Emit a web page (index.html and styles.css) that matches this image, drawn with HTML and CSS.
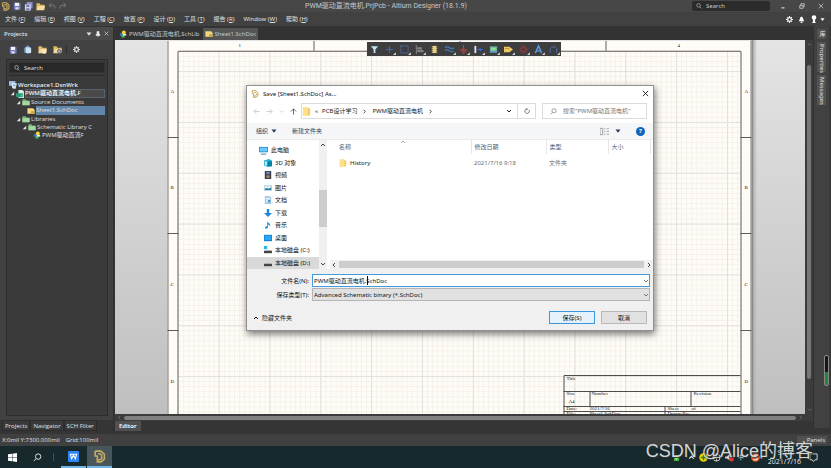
FILE: index.html
```html
<!DOCTYPE html>
<html lang="zh-CN">
<head>
<meta charset="utf-8">
<title>PWM驱动直流电机.PrjPcb - Altium Designer (18.1.9)</title>
<link rel="stylesheet" href="styles.css">
</head>
<body>
<svg class="defs" aria-hidden="true">
  <symbol id="altium" viewBox="0 0 12 12"><path d="M2 1h5.2L10.500 4v4.500L7.500 11H4V8.500M2 1v4.500h2.500M4.500 3.500h2L8 5v3L6.500 9H4V5.500" fill="none" stroke="#c9a961" stroke-width="1.500"/></symbol>
  <symbol id="disk" viewBox="0 0 10 10"><path d="M1 1h7.500L9.500 2v7.500H1z" fill="#7779bd"/><path d="M2.500 1h5v4h-5z" fill="#f1f1fa"/><path d="M3 6.500h4v3H3z" fill="#dcdcf0"/></symbol>
  <symbol id="folder" viewBox="0 0 10 10"><path d="M.5 1.500h3.500l1 1.500h4.500v6H.5z" fill="#e2b866"/><path d="M2 4.500h8L8.500 9.200H.5z" fill="#f4dca0"/></symbol>
  <symbol id="greenfolder" viewBox="0 0 10 10"><path d="M.5 1.500h4l1 1.500h4v6H.5z" fill="#76b478"/><path d="M.5 4h9v5h-9z" fill="#a5d7a2"/></symbol>
  <symbol id="winfolder" viewBox="0 0 10 10"><path d="M1 .5h5.500v1H9v8H1z" fill="#f3ce64"/><path d="M1 .5h5.500v9H1z" fill="#ffe08a"/></symbol>
  <symbol id="sheet" viewBox="0 0 10 8"><path d="M.5.500h7l2 2v5h-9z" fill="#f3d77a"/><path d="M5 4h4.500v3.500H5z" fill="#cca848"/></symbol>
  <symbol id="lib" viewBox="0 0 10 10"><path d="M1 4h4v3H1z" fill="#3478c9"/><circle cx="6" cy="3" r="2.500" fill="#f4d13d"/><path d="M3 6h4v3.500H3z" fill="#4cae62"/><path d="M5 5h4v2H5z" fill="#e8f0e0"/></symbol>
  <symbol id="mag" viewBox="0 0 10 10"><circle cx="5.700" cy="4" r="3" fill="none" stroke="currentColor"/><path d="M3.500 6.300L.8 9" stroke="currentColor" fill="none"/></symbol>
  <symbol id="maglens" viewBox="0 0 10 10"><circle cx="4.300" cy="4" r="3" fill="none" stroke="currentColor"/><path d="M6.500 6.300L9 9" stroke="currentColor" fill="none"/></symbol>
  <symbol id="gear" viewBox="0 0 10 10"><circle cx="5" cy="5" r="2.700" fill="none" stroke="currentColor" stroke-width="1.700"/><path d="M5 0v1.500M5 8.500V10M0 5h1.500M8.500 5H10M1.500 1.500l1 1M7.500 7.500l1 1M8.500 1.500l-1 1M2.500 7.500l-1 1" stroke="currentColor" stroke-width="1.500"/></symbol>
  <symbol id="down" viewBox="0 0 6 6"><path d="M1 2l2 2 2-2" fill="none" stroke="currentColor"/></symbol>
  <symbol id="up" viewBox="0 0 6 6"><path d="M1 4l2-2 2 2" fill="none" stroke="currentColor"/></symbol>
  <symbol id="left" viewBox="0 0 6 6"><path d="M4 1L2 3l2 2" fill="none" stroke="currentColor"/></symbol>
  <symbol id="right" viewBox="0 0 6 6"><path d="M2 1l2 2-2 2" fill="none" stroke="currentColor"/></symbol>
  <symbol id="tri" viewBox="0 0 6 6"><path d="M.5 1.500h5L3 4.800z" fill="currentColor"/></symbol>
  <symbol id="open" viewBox="0 0 6 6"><path d="M5 1v4H1z" fill="#e6e6e6"/></symbol>
  <symbol id="x" viewBox="0 0 8 8"><path d="M1 1l6 6M7 1L1 7" fill="none" stroke="currentColor"/></symbol>
</svg>

<header class="titlebar">
  <div class="quick">
    <svg class="i9"><use href="#altium"/></svg>
    <button aria-label="Save"><svg class="i8"><use href="#disk"/></svg></button>
    <button aria-label="Save all"><svg class="i9" viewBox="0 0 10 10"><path d="M3 0h6.500v7H3z" fill="#8d8fca"/><path d="M1 2.500h6.500v7H1z" fill="#cfd0ee"/><path d="M2.500 3h3.500v2.500H2.500zM2.500 7h3.500v2H2.500z" fill="#7779bd"/></svg></button>
    <button aria-label="Open"><svg class="i9"><use href="#folder"/></svg></button>
    <button aria-label="Undo"><svg class="i8" viewBox="0 0 8 8"><path d="M3.500 1L1 3.200l2.500 2M1 3.200h4q2.500.3 2 3.300" fill="none" stroke="#787878"/></svg></button>
    <button aria-label="Redo"><svg class="i8" viewBox="0 0 8 8"><path d="M4.500 1L7 3.200l-2.500 2M7 3.200H3Q.5 3.500 1 6.500" fill="none" stroke="#787878"/></svg></button>
  </div>
  <div class="caption">PWM驱动直流电机.PrjPcb - Altium Designer (18.1.9)</div>
  <div class="winctl">
    <label class="topsearch"><svg class="i6"><use href="#maglens"/></svg><input aria-label="Search" placeholder="Search"></label>
    <button aria-label="Minimize"><svg class="i6" viewBox="0 0 8 8"><path d="M2 6.500h4" stroke="#ddd" stroke-width="1.500"/></svg></button>
    <button aria-label="Restore"><svg class="i6" viewBox="0 0 8 8"><path d="M1 3.500h4.500V7H1zM2.500 3V1H7v3.800H6" fill="none" stroke="#ddd"/></svg></button>
    <button aria-label="Close"><svg class="i6"><use href="#x"/></svg></button>
  </div>
</header>

<nav class="menubar">
  <a href="#">文件 (<u>F</u>)</a><a href="#">编辑 (<u>E</u>)</a><a href="#">视图 (<u>V</u>)</a><a href="#">工程 (<u>C</u>)</a><a href="#">放置 (<u>P</u>)</a><a href="#">设计 (<u>D</u>)</a><a href="#">工具 (<u>T</u>)</a><a href="#">报告 (<u>R</u>)</a><a href="#">Window (<u>W</u>)</a><a href="#">帮助 (<u>H</u>)</a>
  <div class="menuicons">
    <button aria-label="Settings"><svg class="i7"><use href="#gear"/></svg></button>
    <button aria-label="Notifications"><svg class="i7" viewBox="0 0 8 8"><path d="M4 .5Q6 1 6 3.500L7 6H1l1-2.500Q2 1 4 .5zM3 6.500h2V8H3z" fill="#fff"/></svg></button>
    <button class="account" aria-label="Account"><svg class="i8" viewBox="0 0 8 8"><circle cx="4" cy="2.500" r="2.300" fill="#fff"/><path d="M3 4h2v2.500l1 1.500H2l1-1.500z" fill="#fff"/></svg><svg class="i5"><use href="#tri"/></svg></button>
  </div>
</nav>

<main class="work">
  <aside class="projects">
    <header><h2>Projects</h2><svg class="i6"><use href="#tri"/></svg><svg class="i6" viewBox="0 0 6 6"><path d="M2 .5h2v3h1v1H1v-1h1zM3 4v2" fill="#eee" stroke="#eee" stroke-width=".6"/></svg><svg class="i5"><use href="#x"/></svg></header>
    <div class="tools">
      <svg class="i8"><use href="#disk"/></svg>
      <svg class="i9" viewBox="0 0 10 10"><path d="M1 4l4-4 4 3v5L6 10 1 8z" fill="#5f8bb5"/><path d="M3 2.500h4L9 4v5H3z" fill="#cfe2f0"/></svg>
      <svg class="i9" viewBox="0 0 10 10"><use href="#folder"/><path d="M5 5h4v4.500H5z" fill="#f6e9c8"/></svg>
      <svg class="i9" viewBox="0 0 10 10"><use href="#folder"/><circle cx="7" cy="7" r="2" fill="#aaa" stroke="#555"/></svg>
      <i></i>
      <svg class="i7"><use href="#gear"/></svg>
    </div>
    <div class="treebox">
      <label class="search"><svg class="i6"><use href="#maglens"/></svg><input aria-label="Search projects" placeholder="Search"></label>
      <hr>
      <ul class="tree">
        <li class="l0 b"><svg class="i8" viewBox="0 0 10 10"><path d="M0 0h8v6H0z" fill="#9ab8df"/><path d="M3 2l7 1-2 7-4-1z" fill="#dbe7f5"/><path d="M5 5l3 1" stroke="#3e6ba5"/></svg>Workspace1.DsnWrk</li>
        <li class="l1 b tall project"><svg class="i5"><use href="#open"/></svg><svg class="i8" viewBox="0 0 10 10"><path d="M3 0h5l2 2v8H3z" fill="#d5efe3"/><path d="M0 4h7v5H0z" fill="#2b9878"/><path d="M6 4h3v5H6z" fill="#4ab48f"/></svg><span>PWM驱动直流电机.F</span></li>
        <li class="l2"><svg class="i5"><use href="#open"/></svg><svg class="i8"><use href="#greenfolder"/></svg>Source Documents</li>
        <li class="l3 tall current"><svg class="i8"><use href="#sheet"/></svg><span>Sheet1.SchDoc</span></li>
        <li class="l2"><svg class="i5"><use href="#open"/></svg><svg class="i8"><use href="#greenfolder"/></svg>Libraries</li>
        <li class="l4"><svg class="i5"><use href="#open"/></svg><svg class="i8"><use href="#greenfolder"/></svg>Schematic Library C</li>
        <li class="l5"><svg class="i8"><use href="#lib"/></svg>PWM驱动直流F</li>
      </ul>
    </div>
    <div class="paneltabs"><button>Projects</button><button>Navigator</button><button>SCH Filter</button></div>
  </aside>

  <section class="editor">
    <div class="doctabs"><button><svg class="i8"><use href="#lib"/></svg>PWM驱动直流电机.SchLib</button><button class="on"><svg class="i8"><use href="#sheet"/></svg>Sheet1.SchDoc</button></div>
    <div class="viewport">
      <div class="canvas">
        <svg class="paper" viewBox="115 40 691 374" preserveAspectRatio="xMidYMin slice">
          <defs>
            <pattern id="minor" x="168.500" y="20.400" width="5.080" height="5.080" patternUnits="userSpaceOnUse"><path d="M0 .5h5.080M.5 0v5.080" stroke="#f5f1ea" stroke-width=".9"/></pattern>
            <pattern id="major" x="168.200" y="20.200" width="50.850" height="50.850" patternUnits="userSpaceOnUse"><path d="M0 .5h51M.5 0v51" stroke="#e3e1dc"/></pattern>
            <linearGradient id="edge"><stop offset="0" stop-color="#666"/><stop offset=".4" stop-color="#aaa" stop-opacity=".7"/><stop offset="1" stop-color="#bbb" stop-opacity="0"/></linearGradient>
          </defs>
          <path d="M752 40h6v374h-6z" fill="url(#edge)"/>
          <path d="M168 41h584v373H168z" fill="#fffcf7"/>
          <path d="M179 51h562v363H179z" fill="url(#minor)"/>
          <path d="M179 51h562v363H179z" fill="url(#major)"/>
          <path d="M168.500 414V41M751.500 41v373" stroke="#777" fill="none"/>
          <path d="M178.500 414V51.500h563V414M168 137.500h11M168 233.500h11M168 330.500h11M741 137.500h11M741 233.500h11M741 330.500h11M314.500 41v10M460.500 41v10M606.500 41v10" stroke="#5d5b59" fill="none"/>
          <path d="M179 51h562" stroke="#aaa5a0"/>
          <g class="zone"><text x="239" y="47">1</text><text x="385" y="47">2</text><text x="531" y="47">3</text><text x="678" y="47">4</text>
          <text x="171" y="93">A</text><text x="171" y="189">B</text><text x="171" y="286">C</text><text x="171" y="383">D</text>
          <text x="745" y="93">A</text><text x="745" y="189">B</text><text x="745" y="286">C</text><text x="745" y="383">D</text></g>
          <path d="M564.500 414v-38.500H741M564 391.500h177M564 406.500h177M564 411.500h177M590.500 391v15M691.500 391v15M665.500 406v8" stroke="#4f4d4b" fill="none"/>
          <g class="block"><text x="567" y="380">Title</text><text x="567" y="395">Size</text><text x="569" y="403">A4</text><text x="592" y="395">Number</text><text x="694" y="395">Revision</text><text x="567" y="410">Date:</text><text x="590" y="410">2021/7/16</text><text x="668" y="410">Sheet</text><text x="692" y="410">of</text><text x="567" y="415">File:</text><text x="590" y="415">Sheet1.SchDoc</text><text x="668" y="415">Drawn By:</text></g>
        </svg>
        <div class="active" role="toolbar">
          <svg viewBox="0 0 10 10"><path d="M1 1.500h8L6 5v4H4V5z" fill="#bfe6f2"/></svg>
          <svg viewBox="0 0 10 10"><path d="M5 1v8M1 5h8" stroke="#4668a8" stroke-width="1.200"/><path d="M12 8v3H9z" fill="#ddd"/></svg>
          <svg viewBox="0 0 10 10"><path d="M1 1h8v8H1z" fill="none" stroke="#5577c4" stroke-dasharray="2 1"/><path d="M12 8v3H9z" fill="#ddd"/></svg>
          <svg viewBox="0 0 10 10"><path d="M1.500 0v10M3 3h4v1.500H3zM3 6h6v1.500H3z" stroke="#8a8a8a" fill="#777"/><path d="M12 8v3H9z" fill="#ddd"/></svg>
          <svg viewBox="0 0 10 10"><path d="M3 1h4v8H3z" fill="#f0cf72"/><path d="M2 2h1M2 4h1M2 6h1M2 8h1M7 2h1M7 4h1M7 6h1M7 8h1" stroke="#fff0b8"/></svg>
          <svg viewBox="0 0 10 10"><path d="M0 3q2.500-2 5 0t5 0M0 6.500q2.500-2 5 0t5 0" fill="none" stroke="#3f7fc0" stroke-width="1.300"/><path d="M12 8v3H9z" fill="#ddd"/></svg>
          <svg viewBox="0 0 10 10"><path d="M5 0v5M1 5.500h8M2.500 7.500h5M4 9.300h2" stroke="#b8443e" stroke-width="1.300"/><path d="M12 8v3H9z" fill="#ddd"/></svg>
          <svg viewBox="0 0 10 10"><path d="M1.500 1v8" stroke="#dce8ff" stroke-width="2"/><path d="M3 5h3l1-2v4l1-2h2" fill="none" stroke="#3e67bd" stroke-width="1.200"/><path d="M12 8v3H9z" fill="#ddd"/></svg>
          <svg viewBox="0 0 10 10"><path d="M1 1.500h8v7H1z" fill="#6fae9f"/><path d="M2.500 3h5v3h-5z" fill="#8be091"/><path d="M1 7.500h8" stroke="#5a8fd6"/><path d="M12 8v3H9z" fill="#ddd"/></svg>
          <svg viewBox="0 0 10 10"><path d="M0 2h6l4 3-4 3H0z" fill="#f0c964"/><path d="M1 4h5" stroke="#b89036"/><path d="M12 8v3H9z" fill="#ddd"/></svg>
          <svg viewBox="0 0 10 10"><path d="M5 .5L9.500 5 5 9.500.5 5z" fill="none" stroke="#a3383a"/><circle cx="5" cy="5" r="2.200" fill="none" stroke="#a3383a"/><path d="M12 8v3H9z" fill="#ddd"/></svg>
          <svg viewBox="0 0 10 10"><path d="M1.500 9L5 1l3.500 8M3 6.500h4" fill="none" stroke="#5c9be0" stroke-width="1.600"/><path d="M12 8v3H9z" fill="#ddd"/></svg>
          <svg viewBox="0 0 10 10"><path d="M1.500 9Q0 2 5 2t3.500 7" fill="none" stroke="#466fa8" stroke-width="1.100"/><path d="M12 8v3H9z" fill="#ddd"/></svg>
        </div>
      </div>
      <div class="vbar"><svg class="i5"><use href="#up"/></svg><i></i><svg class="i5"><use href="#down"/></svg></div>
      <div class="hbar"><svg class="i5"><use href="#left"/></svg><i></i><svg class="i5"><use href="#right"/></svg></div>
    </div>
    <div class="edtab"><button>Editor</button></div>
  </section>

  <aside class="rail"><button>库</button><button>Properties</button><button>Messages</button><div class="meter"></div></aside>
</main>

<footer class="status"><span>X:0mil Y:7300.000mil</span><span>Grid:100mil</span><button>Panels</button></footer>

<div class="taskbar">
  <button class="tb" aria-label="Start"><svg class="i9" viewBox="0 0 10 10"><path d="M0 1.500l4.500-.7v3.900H0zM5 .7L10 0v4.700H5zM0 5.200h4.500v4L0 8.600zM5 5.200h5V10l-5-.7z" fill="#fff"/></svg></button>
  <button class="tb" aria-label="Search"><svg class="i9"><use href="#mag"/></svg></button>
  <i class="tbsep"></i>
  <button class="tb run" aria-label="WPS"><svg class="i11" viewBox="0 0 12 12"><rect width="12" height="12" rx="1" fill="#2d86f5"/><path d="M2 3.500h8M2.500 3.500L4 8.500l2-4 2 4 1.500-5" fill="none" stroke="#fff" stroke-width="1.200"/></svg></button>
  <button class="tb run focus" aria-label="Altium Designer"><svg class="i13"><use href="#altium"/></svg></button>
  <div class="tray">
    <svg class="i7" viewBox="0 0 8 8"><rect x="1" y="1" width="6" height="7" rx="1" fill="#42b83a"/><path d="M2.500 5L4 6l2-3" stroke="#fff" fill="none"/></svg>
    <svg class="i7"><use href="#up"/></svg>
    <svg class="i9" viewBox="0 0 10 10"><circle cx="5" cy="5" r="4.700" fill="#f5d500"/><path d="M5 2v6M2 5h6" stroke="#24802f" stroke-width="1.600"/></svg>
    <svg class="i9" viewBox="0 0 10 10"><circle cx="5" cy="5" r="4" fill="none" stroke="#ddd"/><path d="M1 5h8M5 1v8" stroke="#ddd"/></svg>
    <svg class="i9" viewBox="0 0 10 10"><path d="M0 4h2l3-3v7L2 6H0z" fill="#ccc"/><circle cx="7.300" cy="7" r="2.500" fill="#e33"/></svg>
    <span>中</span>
    <svg class="i9" viewBox="0 0 10 10"><circle cx="5" cy="5" r="4.800" fill="#ee5a27"/><path d="M7.500 2.500h-4q-1 1.200.5 2.300h2q1.500 1.300.5 2.700h-4" fill="none" stroke="#fff" stroke-width="1.300"/></svg>
    <time>9:23<br>2021/7/16</time>
    <svg class="i9" viewBox="0 0 10 10"><path d="M1 1h8v6.500H6.500L5 9.500 3.500 7.500H1z" fill="none" stroke="#ddd"/></svg>
  </div>
</div>

<div class="watermark">CSDN @Alice的博客</div>

<div class="dialog" role="dialog" aria-labelledby="dlgtitle">
  <header><svg class="i8"><use href="#altium"/></svg><span id="dlgtitle">Save [Sheet1.SchDoc] As...</span><button aria-label="Close"><svg class="i7"><use href="#x"/></svg></button></header>
  <div class="navrow">
    <svg class="i7 dim" viewBox="0 0 8 8"><path d="M4 1L1 4l3 3M1 4h6.500" fill="none" stroke="currentColor"/></svg>
    <svg class="i7 dim" viewBox="0 0 8 8"><path d="M4 1l3 3-3 3M7 4H.5" fill="none" stroke="currentColor"/></svg>
    <svg class="i5 dim"><use href="#down"/></svg>
    <svg class="i7" viewBox="0 0 8 8"><path d="M1 4l3-3 3 3M4 1v6.500" fill="none" stroke="currentColor"/></svg>
    <div class="crumbs"><svg class="i9"><use href="#winfolder"/></svg><span>«</span><span>PCB设计学习</span><svg class="i5"><use href="#right"/></svg><span>PWM驱动直流电机</span><svg class="i5"><use href="#right"/></svg><svg class="i6 push"><use href="#down"/></svg><button aria-label="Refresh"><svg class="i6" viewBox="0 0 8 8"><path d="M6.500 2.500A3 3 0 1 1 3 1.500h1M4 0v3" fill="none" stroke="#555"/></svg></button></div>
    <label class="find"><svg class="i7"><use href="#mag"/></svg><input aria-label="搜索" placeholder='搜索"PWM驱动直流电机"'></label>
  </div>
  <div class="cmds"><button>组织<svg class="i6"><use href="#tri"/></svg></button><button>新建文件夹</button><button class="view" aria-label="View"><svg class="i9" viewBox="0 0 10 8"><path d="M0 .5h3v7H0zM4.500 1h1.500M7.500 1H10M4.500 4h1.500M7.500 4H10M4.500 7h1.500M7.500 7H10" fill="none" stroke="#9a9a9a"/></svg><svg class="i6"><use href="#tri"/></svg></button><button class="help" aria-label="Help">?</button></div>
  <div class="browse">
    <ul class="places">
      <li class="pc"><svg class="i9" viewBox="0 0 10 10"><path d="M0 1h10v6H0z" fill="#2795df"/><path d="M1 2h8v4H1z" fill="#6cc8f7"/><path d="M2 9h6" stroke="#46708c"/></svg>此电脑</li>
      <li><svg class="i8" viewBox="0 0 10 10"><path d="M0 2l6-2 4 2v7l-5 1-5-2z" fill="#25b3d2"/><path d="M4 3h6v6H4z" fill="#087fa7"/><path d="M1 3h3v5H1z" fill="#a9f0f6"/></svg>3D 对象</li>
      <li><svg class="i8" viewBox="0 0 10 10"><path d="M1 0h8v10H1z" fill="#3a3f4c"/><path d="M3 1h4v3H3z" fill="#6f92c9"/><path d="M3 5.500h4v3H3z" fill="#b08b59"/></svg>视频</li>
      <li><svg class="i8" viewBox="0 0 10 10"><path d="M0 1.500h10v7H0z" fill="#b6d5ea"/><path d="M1 3h8v4H1z" fill="#e9f5fb"/><path d="M1 6l3-1 2 1 3-2v3.500H1z" fill="#2c7f9c"/></svg>图片</li>
      <li><svg class="i8" viewBox="0 0 10 10"><path d="M1 0h6l2 2v8H1z" fill="#a8cbe2"/><path d="M2.500 3h5M2.500 5h5M2.500 7h5" stroke="#fff"/><path d="M5 5h3v3H5z" fill="#4d9acb"/></svg>文档</li>
      <li><svg class="i8" viewBox="0 0 10 10"><path d="M3.500 0h3v5H10L5 10 0 5h3.500z" fill="#2283df"/></svg>下载</li>
      <li><svg class="i8" viewBox="0 0 10 10"><path d="M4 0q.5 2 3 3 1.500 1.500 0 4 0-2-2-2.500V8Q4 10 1.500 9.500.5 8 2 7t2 0z" fill="#1497e8"/></svg>音乐</li>
      <li><svg class="i8" viewBox="0 0 10 10"><path d="M0 1h10v8H0z" fill="#1581cf"/><path d="M1 2h8v5.500H1z" fill="#28a7f5"/></svg>桌面</li>
      <li><svg class="i8" viewBox="0 0 10 10"><path d="M0 6h10v3H0z" fill="#444"/><path d="M1 5h8v1H1z" fill="#aaa"/><path d="M0 0h4v4H0z" fill="#29b4ec"/></svg>本地磁盘 (C:)</li>
      <li class="sel"><svg class="i8" viewBox="0 0 10 10"><path d="M0 6h10v3H0z" fill="#444"/><path d="M1 5h8v1H1z" fill="#aaa"/></svg>本地磁盘 (D:)</li>
    </ul>
    <div class="pbar"><svg class="i6"><use href="#up"/></svg><i></i><svg class="i6"><use href="#down"/></svg></div>
    <div class="files">
      <table><thead><tr><th class="c1">名称</th><th class="c2">修改日期</th><th class="c3">类型</th><th class="c4">大小</th><th></th></tr></thead>
      <tbody><tr><td><svg class="i8"><use href="#winfolder"/></svg><span>History</span></td><td>2021/7/16 9:18</td><td>文件夹</td><td></td><td></td></tr></tbody></table>
      <svg class="sort i6"><use href="#up"/></svg>
      <div class="fbar"><svg class="i6"><use href="#left"/></svg><i></i><svg class="i6"><use href="#right"/></svg></div>
    </div>
  </div>
  <form class="save">
    <label for="fn">文件名(N):</label><div class="combo"><input id="fn" value="PWM驱动直流电机.SchDoc"><svg class="i6"><use href="#down"/></svg></div>
    <label for="ft">保存类型(T):</label><div class="combo"><select id="ft"><option>Advanced Schematic binary (*.SchDoc)</option></select><svg class="i6"><use href="#down"/></svg></div>
    <div class="actions"><button type="button" class="hide"><svg class="i6"><use href="#up"/></svg>隐藏文件夹</button><button type="button" class="btn primary">保存(S)</button><button type="button" class="btn">取消</button></div>
  </form>
</div>
</body>
</html>
```
FILE: styles.css
```css
* { box-sizing: border-box; }
html, body { height: 100%; }
body { margin: 0; display: flex; flex-direction: column; overflow: hidden; background: #353535; color: #e0e0e0; font: 6px/8px "Noto Sans", "Noto Sans CJK SC", sans-serif; }
button, input, select { margin: 0; padding: 0; border: 0; background: none; color: inherit; font: inherit; border-radius: 0; outline: 0; min-width: 0; }
button { display: flex; align-items: center; justify-content: center; }
input::placeholder { color: inherit; opacity: 1; }
a { color: inherit; text-decoration: none; }
ul { list-style: none; margin: 0; padding: 0; }
svg { flex: none; display: block; }
.defs { position: absolute; width: 0; height: 0; }
.i5 { width: 5px; height: 5px; } .i6 { width: 6px; height: 6px; } .i7 { width: 7px; height: 7px; }
.i8 { width: 8px; height: 8px; } .i9 { width: 9px; height: 9px; } .i11 { width: 11px; height: 11px; } .i13 { width: 13px; height: 13px; }

.titlebar { display: grid; grid-template-columns: auto 1fr auto; align-items: center; height: 12px; background: #474747; color: #c8c8c8; flex: none; }
.quick { display: flex; gap: 3px; padding-left: 1px; align-items: center; width: 305px; }
.caption { font: 7px/8px Roboto, "Noto Sans CJK SC", sans-serif; }
.winctl { display: flex; align-items: center; gap: 13px; padding-right: 7px; }
.topsearch { display: flex; align-items: center; gap: 4px; width: 78px; height: 10px; padding-left: 4px; background: #2b2b2b; border-radius: 2px; margin-right: -3px; }
.topsearch input, .search input { flex: 1; width: 0; }
.menubar { display: flex; align-items: center; gap: 9px; height: 14px; padding: 0 6px 0 5px; background: #414141; flex: none; }
.menubar u { text-underline-offset: 1px; }
.menuicons { margin-left: auto; display: flex; gap: 5px; color: #fff; align-items: center; }
.account { gap: 2px; }

.work { flex: 1; min-height: 0; display: flex; }
.projects { width: 114px; display: flex; flex-direction: column; background: #414141; border-top: 1px solid #333; border-right: 1px solid #303030; flex: none; font-family: "Open Sans", "Noto Sans CJK SC", sans-serif; }
.projects header { display: flex; align-items: center; gap: 3px; height: 13px; padding: 0 4px; background: #4a4a4a; }
.projects h2 { margin: 0 auto 0 0; font-size: 6px; font-weight: 600; }
.tools { display: flex; align-items: center; gap: 6px; height: 19px; padding-left: 9px; }
.tools i { width: 1px; height: 8px; background: #2c2c2c; margin-left: -2px; }
.treebox { flex: 1; margin: 0 5px 4px 6px; padding: 2px 2px; background: #3a3a3a; border: 1px solid #2c2c2c; }
.search { display: flex; align-items: center; gap: 4px; height: 11px; padding-left: 4px; background: #282828; border: 1px solid #333; border-radius: 1px; }
hr { height: 1px; border: 0; background: #292929; margin: 2px 0 5px; }
.tree li { display: flex; align-items: center; gap: 1px; height: 8px; white-space: nowrap; overflow: hidden; }
.tree .tall { height: 9px; }
.b { font-weight: 600; color: #eee; }
.l1 { padding-left: 1px; } .l2 { padding-left: 7px; } .l3 { padding-left: 18px; } .l4 { padding-left: 13px; } .l5 { padding-left: 24px; }
.tree li span { flex: 1; height: 9px; }
.project span { background: #4a4a4a; box-shadow: inset 0 0 0 1px #576370; }
.current span { background: #6186a9; }
.paneltabs { display: flex; height: 14px; padding: 0 0 3px 2px; background: #353535; }
.paneltabs button { padding: 0 2px; border: 1px solid #2c2c2c; background: #3a3a3a; }

.editor { flex: 1; min-width: 0; display: flex; flex-direction: column; padding-left: 1px; }
.doctabs { display: flex; gap: 1px; height: 14px; padding: 2px 0 0 2px; background: #333; }
.doctabs button { gap: 2px; padding: 0 2px; color: #c8c8c8; }
.doctabs .on { background: #555; }
.viewport { flex: 1; min-height: 0; display: grid; grid-template-columns: 1fr 8px; grid-template-rows: 1fr 7px; background: #3c3c3c; }
.canvas { position: relative; min-height: 0; overflow: hidden; background: linear-gradient(#e4e4e4, #bfbfbf); }
.paper { position: absolute; width: 100%; height: 100%; }
.zone, .block { font: 5px "Liberation Serif", serif; fill: #111; }
.active { position: absolute; top: 2px; left: 252px; width: 194px; height: 14px; display: flex; justify-content: space-around; align-items: center; background: #3e3e3e; }
.active svg { width: 9px; height: 9px; overflow: visible; }
.vbar, .hbar { display: flex; align-items: center; color: #777; }
.vbar { flex-direction: column; padding: 2px 0; gap: 18px; }
.vbar i { width: 4px; flex: 1; border-radius: 2px; background: #777; margin-bottom: 10px; }
.hbar { padding: 0 2px; gap: 2px; }
.hbar i { height: 4px; flex: 1; border-radius: 2px; background: #808080; }
.edtab { display: flex; height: 13px; padding-bottom: 3px; background: #353535; }
.edtab button { padding: 0 4px; background: #505050; color: #fff; font-weight: 600; }
.rail { width: 18px; display: flex; flex-direction: column; align-items: center; gap: 3px; padding-top: 3px; background: #414141; border-left: 1px solid #303030; border-right: 2px solid #383838; margin-bottom: 6px; }
.rail button { writing-mode: vertical-rl; width: 9px; padding: 2px 0; line-height: 9px; background: #525252; flex: none; justify-content: start; }
.rail button + button { height: 30px; }
.meter { width: 5px; height: 31px; margin: auto 0 42px auto; border: 1px solid #888; border-radius: 2px; background: linear-gradient(#161616 55%, #25833a 55%); }
.status { display: flex; align-items: center; gap: 6px; height: 12px; padding: 0 4px 0 2px; background: #404040; flex: none; font-family: "Open Sans", sans-serif; }
.status button { margin-left: auto; padding: 0 2px 0 10px; background: #505050; }
.taskbar { display: flex; align-items: center; height: 22px; background: #18292e; flex: none; }
.tb { width: 25px; height: 22px; color: #eee; }
.tbsep { width: 1px; height: 8px; background: #405056; margin: 0 7px 0 3px; }
.run { border-bottom: 2px solid #70b5e6; }
.focus { background: #47565a; margin-left: 1px; }
.tray { margin-left: auto; display: flex; align-items: center; gap: 4px; padding: 0 13px 0 0; color: #eee; }
.tray svg:first-child { margin-right: 4px; }
.tray span { margin-right: 3px; }
.tray time { text-align: center; font: 7px/9px "Open Sans", sans-serif; margin: 0 4px; }
.watermark { position: absolute; right: 18px; bottom: 4px; font: 18px/26px "Liberation Sans", "Noto Sans CJK SC", sans-serif; color: #d4d6d6; text-shadow: 1px 1px 1px #333; white-space: nowrap; }

.dialog { position: absolute; left: 246px; top: 85px; width: 408px; background: #fff; color: #111; border: 1px solid #909090; box-shadow: 1px 3px 7px #0008; display: flex; flex-direction: column; }
.dialog header { display: flex; align-items: center; gap: 4px; height: 15px; padding: 0 4px; }
.dialog header button { margin-left: auto; }
.navrow { display: flex; align-items: center; gap: 6px; height: 22px; padding: 2px 6px 4px 6px; color: #555; }
.dim { color: #ccc; }
.crumbs { flex: 1; display: flex; align-items: center; align-self: stretch; gap: 5px; border: 1px solid #dcdcdc; color: #222; margin-left: -2px; }
.crumbs span:first-of-type { margin: 0 -1px; }
.push { margin-left: auto; }
.crumbs button { width: 18px; align-self: stretch; border-left: 1px solid #dcdcdc; }
.find { width: 105px; display: flex; align-items: center; align-self: stretch; gap: 6px; border: 1px solid #dcdcdc; padding-left: 7px; color: #777; }
.find input { flex: 1; }
.cmds { display: flex; align-items: center; gap: 15px; height: 17px; padding: 0 8px 0 9px; background: #f4f6f8; color: #26415f; border-bottom: 1px solid #e8eaec; }
.cmds button { gap: 3px; }
.cmds .view { margin-left: auto; gap: 6px; }
.cmds .help { width: 9px; height: 9px; border-radius: 50%; background: #0c64bd; color: #fff; font-weight: 700; }
.browse { display: flex; height: 129px; }
.places { width: 72px; padding-top: 4px; display: grid; grid-auto-rows: 1fr; }
.places li { display: flex; align-items: center; gap: 3px; padding-left: 17px; }
.places .pc { padding-left: 12px; }
.places .sel { background: #d9d9d9; }
.pbar { width: 8px; display: flex; flex-direction: column; align-items: center; background: #f0f0f0; color: #444; padding: 2px 0; }
.pbar i { width: 8px; height: 37px; margin: 42px 0 auto; background: #cdcdcd; }
.files { position: relative; flex: 1; display: flex; flex-direction: column; padding-left: 3px; }
.files table { table-layout: fixed; width: 100%; border-collapse: collapse; color: #6d6d6d; }
.files th { height: 14px; padding: 0 0 0 3px; text-align: left; font-weight: 400; color: #4c607a; border-right: 1px solid #e5e5e5; }
.files th:last-child { border: 0; }
.files th.c1, .files td:first-child { padding-left: 9px; }
.c1 { width: 141px; } .c2 { width: 75px; } .c3 { width: 62px; } .c4 { width: 42px; }
.files td { height: 17px; padding: 0 0 0 3px; }
.files td svg, .files td span { display: inline-block; vertical-align: middle; }
.files td span { color: #222; margin-left: 3px; }
.sort { position: absolute; left: 73px; top: -1px; color: #aaa; }
.fbar { display: flex; align-items: center; gap: 2px; margin-top: auto; height: 9px; background: #f0f0f0; color: #444; padding: 0 1px; }
.fbar i { flex: 1; height: 7px; background: #cdcdcd; }
.save { display: grid; grid-template-columns: 62px 1fr; column-gap: 3px; row-gap: 1px; align-items: center; padding: 5px 3px 6px 0; background: #f0f0f0; }
.save > label { text-align: right; }
.combo { position: relative; }
.combo input, .combo select { display: block; width: 100%; height: 13px; padding: 0 1px; appearance: none; border: 1px solid #b5b5b5; background: #e1e1e1; }
.combo input { border-color: #469bdd; background: #fff linear-gradient(#111, #111) 54px 50% / 1px 9px no-repeat; }
.combo svg { position: absolute; right: 1px; top: 4px; color: #777; }
.actions { grid-column: 1 / -1; display: flex; align-items: center; gap: 6px; padding: 9px 3px 0 6px; }
.hide { gap: 3px; margin-right: auto; }
.btn { width: 46px; height: 13px; background: #e1e1e1; border: 1px solid #b8b8b8; }
.primary { background: #e5f1fb; border-color: #3c96dc; }
```
